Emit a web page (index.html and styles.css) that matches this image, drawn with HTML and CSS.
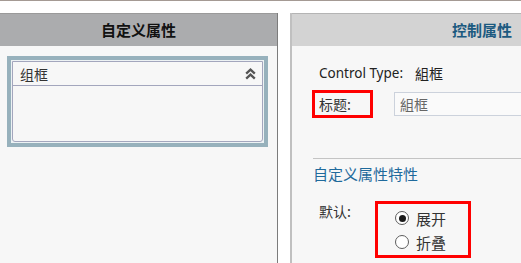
FILE: index.html
```html
<!DOCTYPE html>
<html lang="zh">
<head>
<meta charset="utf-8">
<link rel="stylesheet" href="styles.css">
</head>
<body>
<div class="topline"></div>
<div class="panels">
  <section class="left">
    <div class="left-head">自定义属性</div>
    <div class="left-body">
      <div class="group-outer">
        <div class="group">
          <div class="group-head">
            <span>组框</span>
            <svg class="chev" width="11" height="12" viewBox="0 0 11 12"><path d="M1.2 5.6 L5.5 1.6 L9.8 5.6 M1.2 10.6 L5.5 6.6 L9.8 10.6" fill="none" stroke="#555" stroke-width="2.3"/></svg>
          </div>
          <div class="group-body"></div>
        </div>
      </div>
    </div>
  </section>
  <section class="right">
    <div class="right-head">控制属性</div>
    <div class="right-body">
      <div class="row type-row">
        <span class="lbl">Control Type:</span>
        <span class="val">組框</span>
      </div>
      <div class="row title-row">
        <span class="lbl boxed">标题:</span>
        <div class="input">組框</div>
      </div>
      <div class="sep"></div>
      <div class="section-title">自定义属性特性</div>
      <div class="row default-row">
        <span class="lbl def-lbl">默认:</span>
        <div class="radio-box">
          <div class="radio-row"><span class="radio checked"></span><span>展开</span></div>
          <div class="radio-row"><span class="radio"></span><span>折叠</span></div>
        </div>
      </div>
    </div>
  </section>
</div>
</body>
</html>
```
FILE: styles.css
```css
html, body {
  margin: 0;
  padding: 0;
}
body {
  width: 521px;
  height: 263px;
  overflow: hidden;
  background: #ffffff;
  font-family: "Noto Sans", "Noto Sans CJK SC", sans-serif;
  font-size: 14px;
  color: #333;
}
.topline {
  height: 1px;
  background: #a49a94;
}
.panels {
  display: flex;
  gap: 12px;
  margin-top: 12px;
  height: 250px;
}
.left {
  width: 277px;
  border-right: 1px solid #7c7c7c;
  display: flex;
  flex-direction: column;
}
.left-head {
  height: 32px;
  border-top: 1px solid #9a9a9a;
  background: #abacae;
  text-align: center;
  line-height: 32px;
  font-size: 15px;
  font-weight: bold;
  color: #111;
  font-family: "Noto Sans CJK SC", sans-serif;
}
.left-body {
  flex: 1;
  background: #f7f7f7;
  padding: 10px 0 0 7px;
}
.group-outer {
  width: 261px;
  box-sizing: border-box;
  border: 4px solid #97b1bc;
  padding: 1px;
  background: #edf2f4;
}
.group {
  border: 1px solid #a3a6bd;
  border-radius: 0 0 3px 3px;
  background: #f7f7f7;
}
.group-head {
  height: 23px;
  border-bottom: 1px solid #a3a6bd;
  display: flex;
  align-items: center;
  justify-content: space-between;
  padding: 0 6px 0 7px;
  font-family: "Noto Sans CJK SC", sans-serif;
  font-size: 14px;
  color: #333;
}
.chev {
  display: block;
}
.group-body {
  height: 55px;
}
.right {
  flex: 1;
  border-left: 2px solid #c0c0c0;
  display: flex;
  flex-direction: column;
}
.right-head {
  height: 32px;
  border-top: 1px solid #b4b4b4;
  background: #d3d3d3;
  line-height: 32px;
  text-align: right;
  padding-right: 9px;
  font-size: 15px;
  font-weight: bold;
  color: #1c5a80;
  font-family: "Noto Sans CJK SC", sans-serif;
}
.right-body {
  flex: 1;
  background: #f7f7f7;
  padding-left: 20px;
}
.row {
  display: flex;
}
.lbl {
  padding-left: 7px;
  line-height: 20px;
}
.type-row {
  margin-top: 17px;
  font-size: 13.5px;
  line-height: 20px;
  color: #222;
}
.type-row .val {
  margin-left: 12px;
  font-size: 14px;
  font-family: "Noto Sans CJK SC", sans-serif;
}
.title-row {
  margin-top: 7px;
  align-items: center;
}
.boxed {
  width: 61px;
  height: 28px;
  box-sizing: border-box;
  border: 3px solid #ff0000;
  padding-left: 4px;
  line-height: 22px;
  font-family: "Noto Sans CJK SC", sans-serif;
}
.input {
  margin-left: 21px;
  flex: 1;
  height: 24px;
  box-sizing: border-box;
  border: 1px solid #ccd2dc;
  border-right: none;
  background: #fafafa;
  padding-left: 5px;
  line-height: 22px;
  color: #666;
  font-family: "Noto Sans CJK SC", sans-serif;
}
.sep {
  margin-top: 40px;
  margin-left: 1px;
  height: 1px;
  background: #c4c4c4;
}
.section-title {
  margin-top: 5px;
  margin-left: 1px;
  line-height: 20px;
  font-size: 15px;
  color: #1f6a9c;
  font-family: "Noto Sans CJK SC", sans-serif;
}
.default-row {
  margin-top: 17px;
  align-items: flex-start;
}
.def-lbl {
  width: 63px;
  box-sizing: border-box;
  font-family: "Noto Sans CJK SC", sans-serif;
}
.radio-box {
  width: 96px;
  box-sizing: border-box;
  border: 3px solid #ff0000;
  padding: 2px 0 1px 17px;
}
.radio-row {
  height: 24px;
  display: flex;
  align-items: center;
  gap: 7px;
  font-size: 15px;
  font-family: "Noto Sans CJK SC", sans-serif;
  color: #333;
}
.radio {
  width: 14px;
  height: 14px;
  box-sizing: border-box;
  border: 1px solid #5e5e5e;
  border-radius: 50%;
  background: #fff;
  display: flex;
  align-items: center;
  justify-content: center;
}
.radio.checked::after {
  content: "";
  width: 7px;
  height: 7px;
  border-radius: 50%;
  background: #1a1a1a;
}
```
